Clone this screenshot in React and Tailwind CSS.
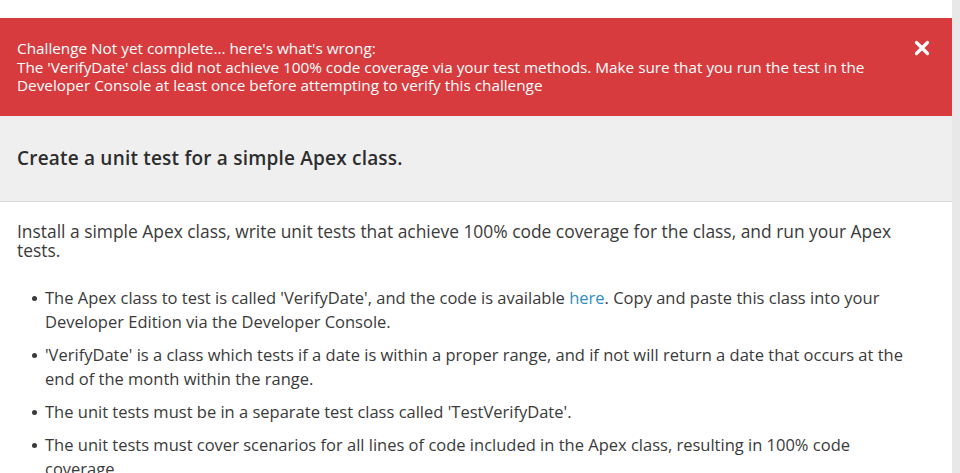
export default function App() {
  const items = [
    <>
      The Apex class to test is called 'VerifyDate', and the code is available{" "}
      <a href="#" className="text-[#2f8ec4]">here</a>. Copy and paste this class into your Developer Edition via the
      Developer Console.
    </>,
    <>
      'VerifyDate' is a class which tests if a date is within a proper range, and if not will return a date that occurs
      at the end of the month within the range.
    </>,
    <>The unit tests must be in a separate test class called 'TestVerifyDate'.</>,
    <>
      The unit tests must cover scenarios for all lines of code included in the Apex class, resulting in 100% code
      coverage.
    </>,
  ];

  return (
    <div className="flex h-[473px] w-[960px] overflow-hidden bg-white font-['Open_Sans',sans-serif]">
      <div className="flex w-[952px] shrink-0 flex-col">
        <div className="h-[18px] shrink-0 bg-white" />

        {/* Error banner */}
        <div className="flex h-[98px] shrink-0 bg-[#d73b3e] text-white">
          <div className="flex-1 pl-[17px] pr-[40px] pt-[21px] text-[15.3px] leading-[18.5px]">
            <div>Challenge Not yet complete... here's what's wrong:</div>
            <div>
              The 'VerifyDate' class did not achieve 100% code coverage via your test methods. Make sure that you run the
              test in the Developer Console at least once before attempting to verify this challenge
            </div>
          </div>
          <div className="pt-[22px] pr-[22px]">
            <svg width="16" height="16" viewBox="0 0 16 16">
              <path d="M2.5 2.5 L13.5 13.5 M13.5 2.5 L2.5 13.5" stroke="white" strokeWidth="3.2" strokeLinecap="round" />
            </svg>
          </div>
        </div>

        {/* Step header */}
        <div className="flex h-[86px] shrink-0 items-center border-b border-[#d8d8d8] bg-[#efefef] pl-[17px]">
          <h2 className="text-[19px] font-semibold tracking-[0.2px] text-[#2d2d2d]">
            Create a unit test for a simple Apex class.
          </h2>
        </div>

        {/* Body */}
        <div className="pl-[17px] pr-[40px] pt-[20px] text-[#3a3a3a]">
          <p className="text-[17.4px] leading-[19px]">
            Install a simple Apex class, write unit tests that achieve 100% code coverage for the class, and run your Apex
            tests.
          </p>
          <ul className="mt-[26px] flex flex-col gap-[9px] pl-[28px] text-[16.5px]">
            {items.map((it, i) => (
              <li key={i} className="relative leading-[24px]">
                <span className="absolute left-[-13px] top-[10px] h-[5px] w-[5px] rounded-full bg-[#3a3a3a]" />
                {it}
              </li>
            ))}
          </ul>
        </div>
      </div>
      <div className="w-[8px] shrink-0 bg-[#e8e8e8]" />
    </div>
  );
}
